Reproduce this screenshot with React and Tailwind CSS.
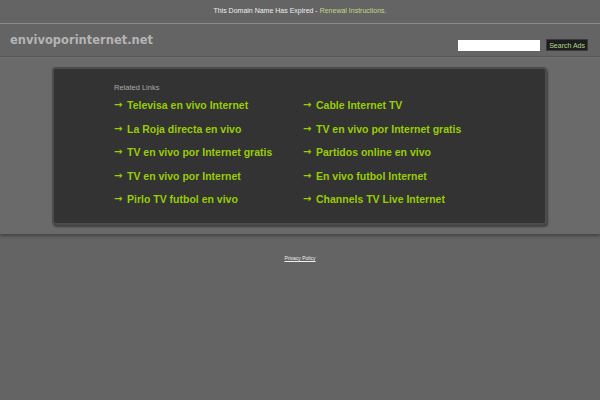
import React from 'react'

const left = [
    'Televisa en vivo Internet',
    'La Roja directa en vivo',
    'TV en vivo por Internet gratis',
    'TV en vivo por Internet',
    'Pirlo TV futbol en vivo',
]

const right = [
    'Cable Internet TV',
    'TV en vivo por Internet gratis',
    'Partidos online en vivo',
    'En vivo futbol Internet',
    'Channels TV Live Internet',
]

const LinkItem = ({ text }) => (
    <a href="#" className="flex items-center h-[23.5px] text-[10.5px] font-bold text-[#99cc00] leading-none whitespace-nowrap">
        <span className="w-[13px] font-['DejaVu_Sans'] font-bold text-[10px]">→</span>
        <span>{text}</span>
    </a>
)

export default function App() {
    return (
        <div className="min-h-[400px] bg-[#646464] font-['Liberation_Sans',Arial,sans-serif]">
            <div className="h-[24px] flex items-center justify-center text-[7px] text-[#eeeeee] border-b border-[#8a8a8a]">
                This Domain Name Has Expired -&nbsp;<a href="#" className="text-[#c2d68a]">Renewal Instructions.</a>
            </div>

            <div className="h-[33px] flex items-start justify-between px-[10px] border-b border-[#595959]">
                <div className="pt-[11px] font-['DejaVu_Sans',sans-serif] font-bold text-[11.5px] text-[#b4b4b4] leading-none">
                    envivoporinternet.net
                </div>
                <div className="flex items-center gap-[6px] pt-[15px] pr-[2px]">
                    <input className="w-[82px] h-[11px] bg-white outline-none" />
                    <button className="h-[12px] px-[2px] bg-[#1d1d1d] border border-[#3a3a3a] text-[7px] text-[#b5d68a] leading-none">Search Ads</button>
                </div>
            </div>

            <div className="bg-[#6a6a6a] border-t border-[#707070] pt-[9px] pb-[9px] shadow-[0_2px_3px_rgba(0,0,0,0.35)]">
                <div className="w-[495px] h-[158px] mx-auto ml-[52px] bg-[#333333] rounded-[4px] border-2 border-[#4c4c4c] shadow-[1px_2px_2px_rgba(0,0,0,0.4)] pl-[60px] pt-[15px]">
                    <div className="text-[7.5px] text-[#aaaaaa] leading-none mb-[2px]">Related Links</div>
                    <div className="grid grid-cols-[189px_1fr]">
                        <div className="flex flex-col">
                            {left.map((t, i) => <LinkItem key={i} text={t} />)}
                        </div>
                        <div className="flex flex-col">
                            {right.map((t, i) => <LinkItem key={i} text={t} />)}
                        </div>
                    </div>
                </div>
            </div>

            <div className="flex justify-center pt-[22px]">
                <a href="#" className="text-[5px] text-[#eeeeee] underline leading-none">Privacy Policy</a>
            </div>
        </div>
    )
}
